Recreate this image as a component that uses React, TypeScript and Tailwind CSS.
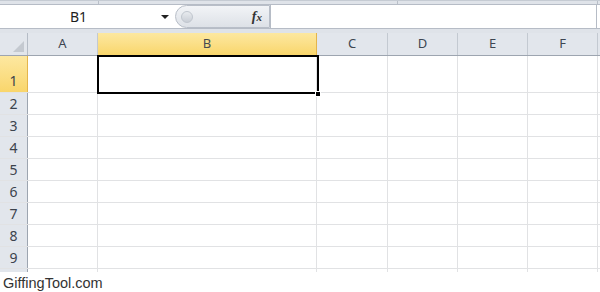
import React from "react";

const cols = [
  { label: "A", w: 70 },
  { label: "B", w: 219 },
  { label: "C", w: 71 },
  { label: "D", w: 70 },
  { label: "E", w: 70 },
  { label: "F", w: 70 },
];

const rows = [1, 2, 3, 4, 5, 6, 7, 8, 9, 10];

function FxIcon() {
  return (
    <span className="font-['Liberation_Serif',serif] text-[14px] italic font-bold leading-none text-[#333]">
      f<span className="text-[11px]">x</span>
    </span>
  );
}

function FormulaBar() {
  return (
    <div className="relative h-[33px] bg-[#dfe3e9] border-t border-[#c5cbd3] pt-[3px] pb-[4px]">
      {/* ribbon separators peeking above */}
      <span className="absolute left-[98px] top-0 h-[3px] w-px bg-[#b9bfc8]" />
      <span className="absolute left-[397px] top-0 h-[3px] w-px bg-[#b9bfc8]" />
      <span className="absolute left-[597px] top-0 h-[3px] w-px bg-[#b9bfc8]" />
      <div className="flex h-[25px] border-y border-[#b6bcc6] bg-white">
        {/* name box */}
        <div className="relative flex w-[175px] items-center justify-center">
          <span className="text-[14px] text-[#1e1e1e] pr-[18px]">B1</span>
          <span className="absolute right-[6px] top-[10px] h-0 w-0 border-x-[4px] border-t-[4px] border-x-transparent border-t-[#222]" />
        </div>
        {/* pill */}
        <div className="relative flex w-[95px] items-center justify-end rounded-l-full border border-[#b8bec8] bg-gradient-to-b from-[#f2f4f7] to-[#dde1e7] pr-[7px]">
          <span className="absolute left-[5px] top-[5px] h-[12px] w-[12px] rounded-full bg-gradient-to-b from-[#e8ebef] to-[#c9ced6] border border-[#c0c6ce]" />
          <FxIcon />
        </div>
        <div className="flex-1 border-l border-[#b6bcc6] border-r border-r-[#b6bcc6] mr-[3px]" />
      </div>
    </div>
  );
}

export default function App() {
  return (
    <div className="w-[600px] h-[292px] bg-white font-['Noto_Sans',sans-serif] overflow-hidden">
      <FormulaBar />
      {/* sheet */}
      <div className="relative h-[239px] overflow-hidden">
        {/* header row */}
        <div className="flex h-[23px] border-b border-[#9da5b0]">
          <div className="relative w-[28px] shrink-0 bg-[#e2e6ec] border-r border-[#b5bcc6]">
            <svg className="absolute right-[3px] bottom-[3px]" width="11" height="11" viewBox="0 0 11 11">
              <polygon points="11,0 11,11 0,11" fill="#c4c9d0" />
            </svg>
          </div>
          {cols.map((c) =>
            c.label === "B" ? (
              <div
                key={c.label}
                style={{ width: c.w }}
                className="shrink-0 flex items-center justify-center bg-gradient-to-b from-[#fde8a0] to-[#f9d66b] border-r border-[#e4b54c] text-[13px] text-[#444a52]"
              >
                {c.label}
              </div>
            ) : (
              <div
                key={c.label}
                style={{ width: c.w }}
                className="shrink-0 flex items-center justify-center bg-[#e2e6ec] border-r border-[#c3c9d1] text-[13px] text-[#3e4652]"
              >
                {c.label}
              </div>
            )
          )}
          <div className="flex-1 bg-[#e2e6ec]" />
        </div>
        {rows.map((r) => (
          <div key={r} className={`flex border-b border-[#e1e2e4] ${r === 1 ? "h-[37px]" : "h-[22px]"}`}>
            <div
              className={
                r === 1
                  ? "w-[28px] shrink-0 flex items-end justify-center pb-[1px] bg-gradient-to-b from-[#fde8a0] to-[#f9d66b] border-r border-[#e4b54c] text-[14px] text-[#3c434c]"
                  : "w-[28px] shrink-0 flex items-center justify-center bg-[#e2e6ec] border-r border-[#9da5b0] text-[14px] text-[#3c434c]"
              }
            >
              {/* row 10 only peeks in, its number is hidden */}
              {r < 10 ? r : null}
            </div>
            {cols.map((c) => (
              <div key={c.label} style={{ width: c.w }} className="shrink-0 border-r border-[#e1e2e4]" />
            ))}
            <div className="flex-1" />
          </div>
        ))}
        {/* selected cell B1 */}
        <div className="absolute left-[97px] top-[22px] w-[222px] h-[39px] border-2 border-black" />
        <div className="absolute left-[315px] top-[58px] h-[6px] w-[6px] bg-black border border-white" />
      </div>
      <div className="h-[20px] bg-white pl-[3px] pt-[3px] text-[14.5px] leading-[17px] text-[#333] font-['Liberation_Sans',sans-serif]">
        GiffingTool.com
      </div>
    </div>
  );
}
